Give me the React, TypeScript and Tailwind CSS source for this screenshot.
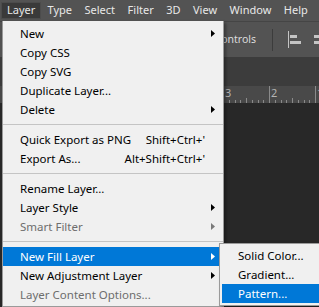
const menuBar = ["Layer", "Type", "Select", "Filter", "3D", "View", "Window", "Help"]

type Item =
  | { sep: true }
  | { sep?: false; label: string; shortcut?: string; sub?: boolean; disabled?: boolean; active?: boolean }

const items: Item[] = [
  { label: "New", sub: true },
  { label: "Copy CSS" },
  { label: "Copy SVG" },
  { label: "Duplicate Layer..." },
  { label: "Delete", sub: true },
  { sep: true },
  { label: "Quick Export as PNG", shortcut: "Shift+Ctrl+'" },
  { label: "Export As...", shortcut: "Alt+Shift+Ctrl+'" },
  { sep: true },
  { label: "Rename Layer..." },
  { label: "Layer Style", sub: true },
  { label: "Smart Filter", sub: true, disabled: true },
  { sep: true },
  { label: "New Fill Layer", sub: true, active: true },
  { label: "New Adjustment Layer", sub: true },
  { label: "Layer Content Options...", disabled: true },
]

const Arrow = ({ color }: { color: string }) => (
  <svg width="4" height="7" viewBox="0 0 4 7" className="block">
    <path d="M0 0 L4 3.5 L0 7 Z" fill={color} />
  </svg>
)

const Ruler = () => {
  const majors = [223, 269, 315]
  const labels = ["3", "2", "1"]
  const ticks: JSX.Element[] = []
  majors.forEach((m, i) => {
    ticks.push(<line key={"m" + i} x1={m + 0.5} y1={0} x2={m + 0.5} y2={17} stroke="#8a8a8a" />)
    for (let k = 1; k < 8; k++) {
      const x = Math.round(m + k * 5.75) + 0.5
      const h = k === 4 ? 5 : 3
      ticks.push(<line key={"t" + i + k} x1={x} y1={17 - h} x2={x} y2={17} stroke="#8a8a8a" />)
    }
    ticks.push(
      <text key={"l" + i} x={m + 2} y={11} fontSize="11" fill="#b4b4b4" fontFamily="Noto Sans, sans-serif">
        {labels[i]}
      </text>
    )
  })
  return (
    <svg width="319" height="17" className="block">
      {ticks}
    </svg>
  )
}

export default function App() {
  return (
    <div className="relative w-[319px] h-[307px] overflow-hidden bg-[#282828] text-[11.5px] font-['Noto_Sans',sans-serif]">
      {/* menu bar */}
      <div className="flex h-[22px] items-center bg-[#535353] pl-[1px] text-[11px] text-[#e8e8e8] border-b border-[#454545] whitespace-nowrap">
        {menuBar.map((m, i) => (
          <div
            key={m}
            className={
              i === 0
                ? "flex h-[17px] shrink-0 items-center px-[5px] bg-[#3a3a3a] border border-[#4c4c4c]"
                : "flex h-[17px] shrink-0 items-center px-[6.25px]"
            }
          >
            {m}
          </div>
        ))}
      </div>

      {/* options bar */}
      <div className="flex h-[35px] items-center bg-[#535353] text-[10.5px] text-[#dcdcdc]">
        <div className="flex w-[256px] shrink-0 justify-end whitespace-nowrap">Show Transform Controls</div>
        <div className="ml-[16px] h-[22px] w-px shrink-0 bg-[#3c3c3c]" />
        <svg width="14" height="17" className="ml-[15px] block shrink-0">
          <rect x="0" y="0" width="1" height="17" fill="#c4c4c4" />
          <rect x="2" y="4" width="7" height="3" fill="#c4c4c4" />
          <rect x="2" y="10" width="11" height="3" fill="#c4c4c4" />
        </svg>
        <svg width="14" height="17" className="ml-[12px] block shrink-0">
          <rect x="0" y="4" width="8" height="3" fill="#c4c4c4" />
          <rect x="0" y="10" width="8" height="3" fill="#c4c4c4" />
        </svg>
      </div>

      {/* tab strip */}
      <div className="h-[29px] bg-[#3c3c3c]" />

      {/* ruler */}
      <div className="h-[17px] bg-[#494949]">
        <Ruler />
      </div>

      {/* Layer menu */}
      <div className="absolute left-[2px] top-[21px] w-[222px] border-x border-b border-[#9a9a9a] bg-[#f0f0f0] pt-[3px] pb-[2px] text-black shadow-[2px_2px_3px_rgba(0,0,0,0.35)]">
        {items.map((it, i) =>
          it.sep ? (
            <div key={i} className="flex h-[11px] items-center">
              <div className="h-px w-full bg-[#c4c4c4]" />
            </div>
          ) : (
            <div
              key={i}
              className={
                "flex h-[19px] items-center pl-[17px] " +
                (it.active ? "bg-[#0078d7] text-white" : it.disabled ? "text-[#6d6d6d]" : "")
              }
            >
              <span className="flex-1 whitespace-nowrap">{it.label}</span>
              {it.shortcut && <span className="whitespace-nowrap">{it.shortcut}</span>}
              <span className="flex w-[18px] pl-[6px]">
                {it.sub && <Arrow color={it.active ? "#ffffff" : it.disabled ? "#7a7a7a" : "#000000"} />}
              </span>
            </div>
          )
        )}
      </div>

      {/* New Fill Layer submenu */}
      <div className="absolute left-[219px] top-[243px] w-[120px] border border-[#9a9a9a] bg-[#f0f0f0] p-[2px] text-black shadow-[2px_2px_3px_rgba(0,0,0,0.35)]">
        <div className="flex h-[19px] items-center pl-[16px]">Solid Color...</div>
        <div className="flex h-[19px] items-center pl-[16px]">Gradient...</div>
        <div className="flex h-[19px] items-center bg-[#0078d7] pl-[16px] text-white">Pattern...</div>
      </div>
    </div>
  )
}
